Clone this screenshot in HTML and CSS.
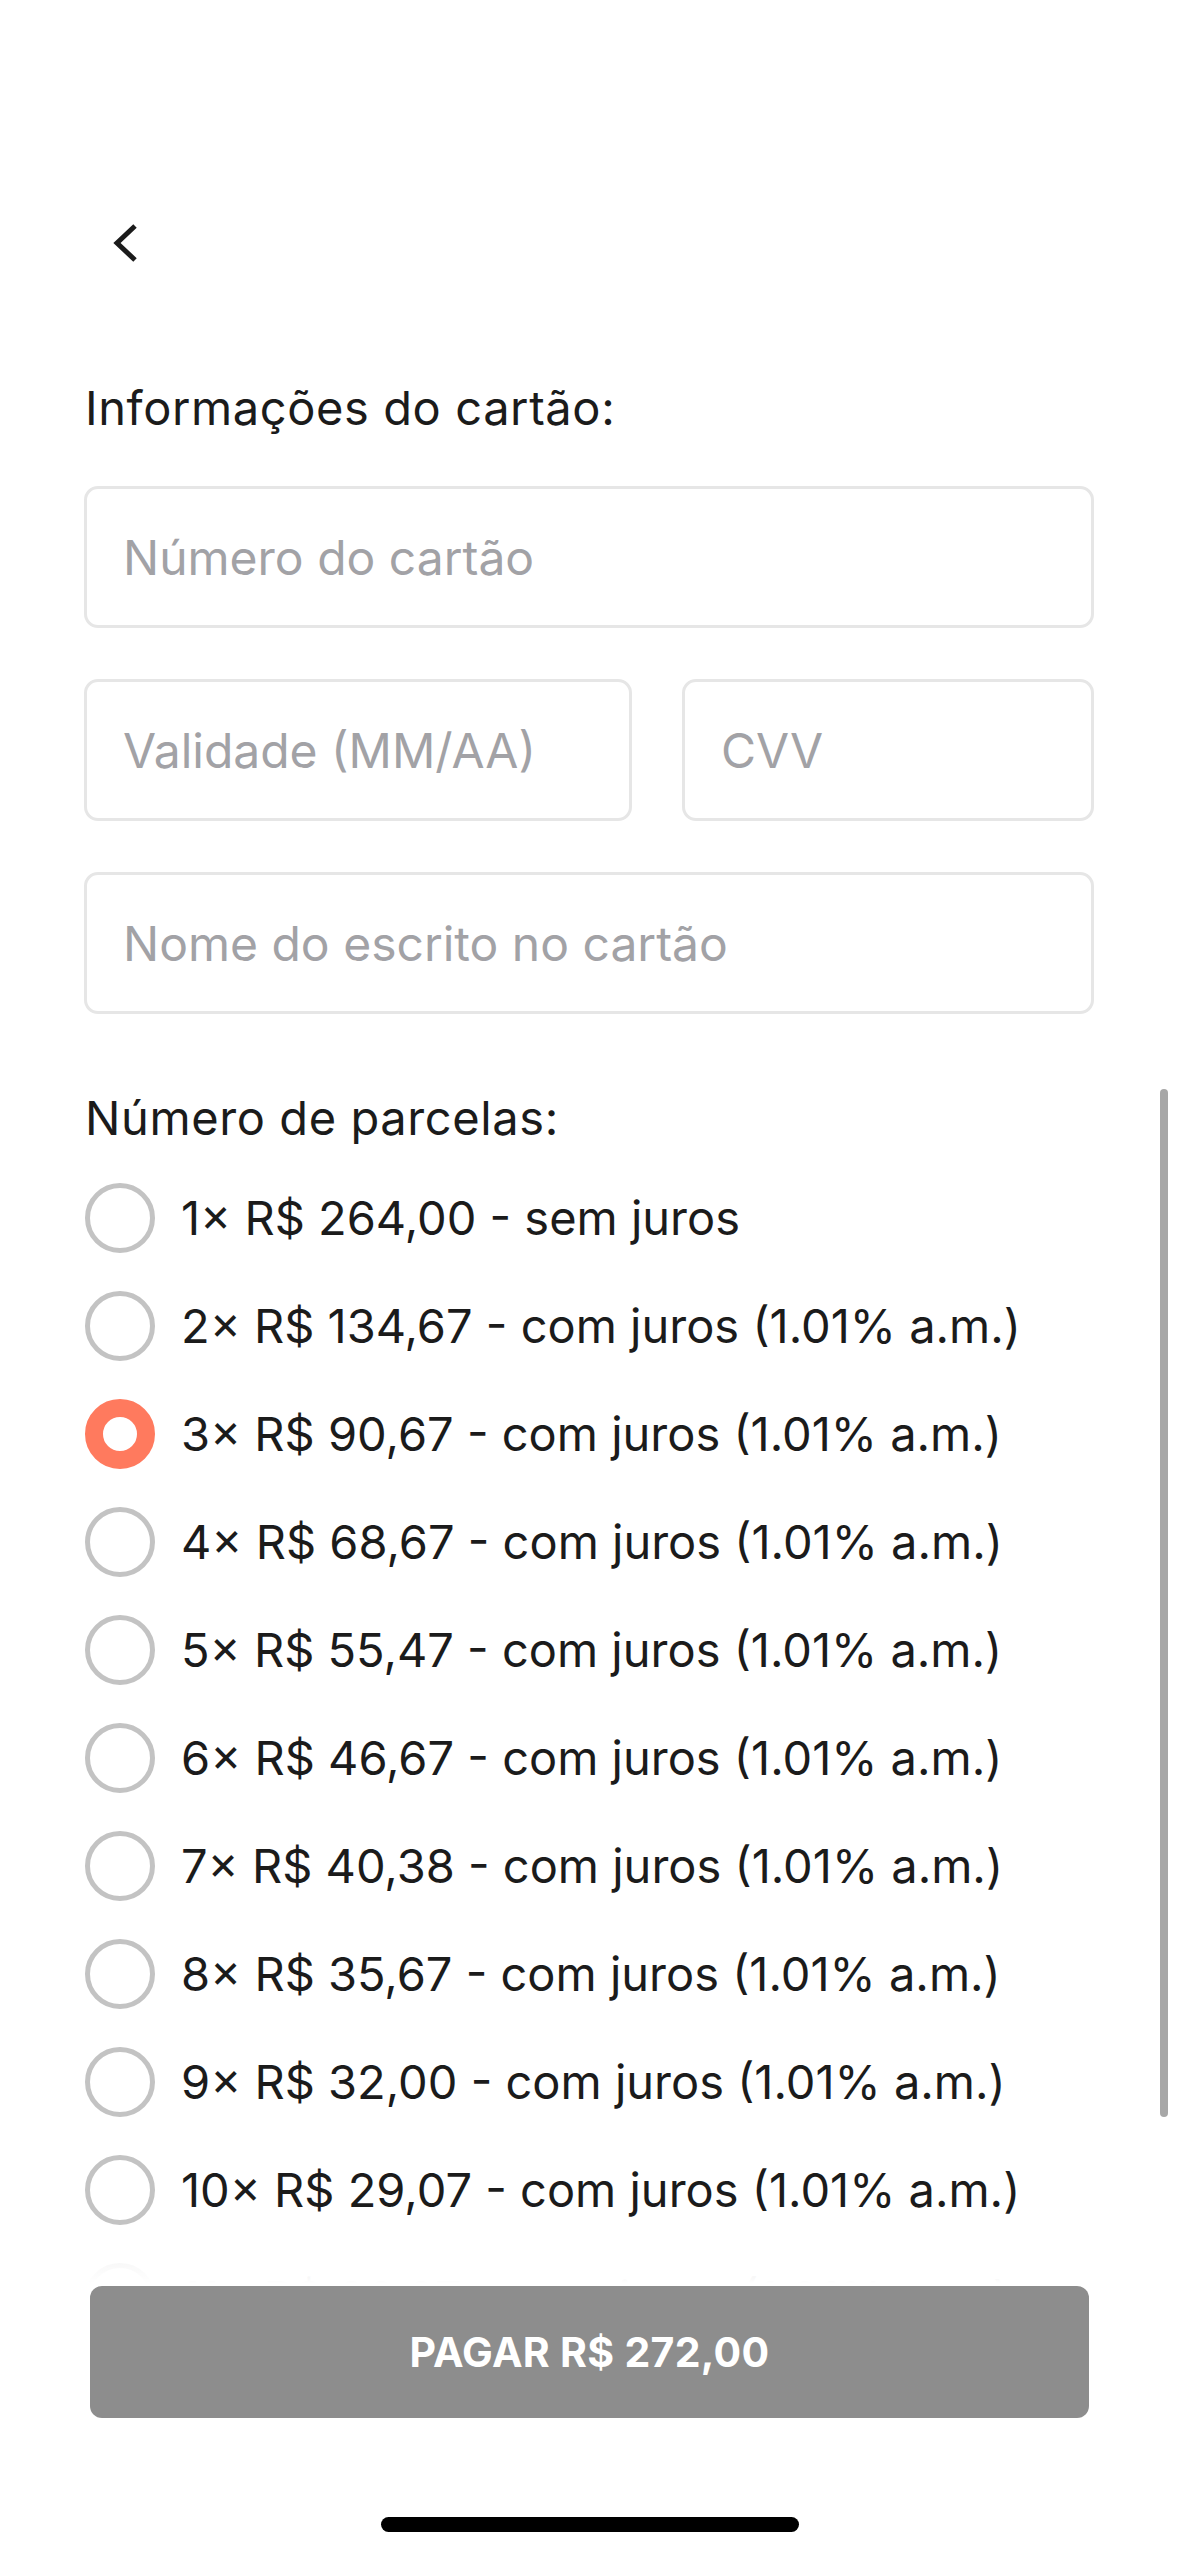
FILE: index.html
```html
<!DOCTYPE html>
<html lang="pt-BR">
<head>
<meta charset="utf-8">
<title>Pagamento com cartão</title>
<link rel="stylesheet" href="styles.css">
</head>
<body>
<div class="page">
  <div class="scroll">
    <div class="content">
      <div class="back">
        <svg width="34" height="48" viewBox="0 0 34 48" aria-hidden="true">
          <path d="M27 7 L9 24 L27 41" fill="none" stroke="#1b1b1b" stroke-width="5"/>
        </svg>
      </div>
      <h2 class="title title-card">Informações do cartão:</h2>
      <div class="fields">
        <input class="field" type="text" placeholder="Número do cartão">
        <div class="field-row">
          <input class="field" type="text" placeholder="Validade (MM/AA)">
          <input class="field" type="text" placeholder="CVV">
        </div>
        <input class="field" type="text" placeholder="Nome do escrito no cartão">
      </div>
      <h2 class="title title-parcelas">Número de parcelas:</h2>
      <ul class="options">
        <li class="option"><span class="radio"></span><span class="label">1× R$ 264,00 - sem juros</span></li>
        <li class="option"><span class="radio"></span><span class="label">2× R$ 134,67 - com juros (1.01% a.m.)</span></li>
        <li class="option"><span class="radio radio-on"></span><span class="label">3× R$ 90,67 - com juros (1.01% a.m.)</span></li>
        <li class="option"><span class="radio"></span><span class="label">4× R$ 68,67 - com juros (1.01% a.m.)</span></li>
        <li class="option"><span class="radio"></span><span class="label">5× R$ 55,47 - com juros (1.01% a.m.)</span></li>
        <li class="option"><span class="radio"></span><span class="label">6× R$ 46,67 - com juros (1.01% a.m.)</span></li>
        <li class="option"><span class="radio"></span><span class="label">7× R$ 40,38 - com juros (1.01% a.m.)</span></li>
        <li class="option"><span class="radio"></span><span class="label">8× R$ 35,67 - com juros (1.01% a.m.)</span></li>
        <li class="option"><span class="radio"></span><span class="label">9× R$ 32,00 - com juros (1.01% a.m.)</span></li>
        <li class="option"><span class="radio"></span><span class="label">10× R$ 29,07 - com juros (1.01% a.m.)</span></li>
        <li class="option"><span class="radio"></span><span class="label">11× R$ 26,67 - com juros (1.01% a.m.)</span></li>
      </ul>
    </div>
    <div class="fade"></div>
    <div class="scrollbar"></div>
  </div>
  <div class="footer">
    <button class="pay" type="button">PAGAR R$ 272,00</button>
    <div class="home-indicator"></div>
  </div>
</div>
</body>
</html>
```

FILE: styles.css
```css
* { box-sizing: border-box; }

html, body {
  margin: 0;
  padding: 0;
  background: #ffffff;
}

body {
  width: 1179px;
  height: 2556px;
  overflow: hidden;
  font-family: Inter, "Noto Sans", sans-serif;
  color: #1b1b1b;
}

.page {
  width: 1179px;
  height: 2556px;
  display: flex;
  flex-direction: column;
}

.scroll {
  position: relative;
  flex: 1;
  overflow: hidden;
}

.content {
  padding: 0 85px 0 84px;
}

.back {
  margin-top: 219px;
  margin-left: 24px;
  height: 48px;
}

.back svg { display: block; }

.title {
  margin: 0;
  font-size: 47px;
  line-height: 52px;
  font-weight: 400;
  letter-spacing: 0.6px;
  padding-left: 1px;
}

.title-card { margin-top: 115px; }
.title-parcelas { margin-top: 78px; }

.fields {
  margin-top: 52px;
  display: flex;
  flex-direction: column;
  gap: 51px;
}

.field-row {
  display: grid;
  grid-template-columns: 548px 1fr;
  gap: 50px;
}

.field {
  display: block;
  width: 100%;
  height: 142px;
  margin: 0;
  border: 3px solid #e6e6e6;
  border-radius: 14px;
  padding: 0 20px 0 36px;
  background: #ffffff;
  font-family: Inter, "Noto Sans", sans-serif;
  font-size: 48px;
  color: #1b1b1b;
  outline: none;
}

.field::placeholder {
  color: #a2a2a6;
  opacity: 1;
}

.options {
  list-style: none;
  margin: 20px 0 0;
  padding: 0;
}

.option {
  display: flex;
  align-items: center;
  height: 108px;
  gap: 26px;
}

.radio {
  flex: none;
  width: 70px;
  height: 70px;
  border-radius: 50%;
  border: 5px solid #c3c3c3;
  background: #ffffff;
  margin-left: 1px;
}

.radio-on {
  border: 18px solid #ff7a5e;
}

.label {
  font-size: 47px;
  line-height: 56px;
  white-space: nowrap;
  color: #1b1b1b;
}

.fade {
  position: absolute;
  left: 0;
  right: 0;
  bottom: 0;
  height: 52px;
  background: linear-gradient(to bottom, rgba(255, 255, 255, 0), rgba(255, 255, 255, 0.85) 50%, #ffffff);
}

.scrollbar {
  position: absolute;
  left: 1160px;
  top: 1089px;
  width: 8px;
  height: 1028px;
  border-radius: 4px;
  background: #a7a7a7;
}

.footer {
  flex: none;
  height: 273px;
  padding: 3px 90px 24px 90px;
  display: flex;
  flex-direction: column;
  align-items: center;
  background: #ffffff;
}

.pay {
  width: 999px;
  height: 132px;
  border: none;
  border-radius: 12px;
  background: #8d8d8d;
  color: #ffffff;
  font-family: Inter, "Noto Sans", sans-serif;
  font-size: 41px;
  font-weight: 700;
  letter-spacing: 0.3px;
  cursor: pointer;
}

.home-indicator {
  margin-top: auto;
  width: 418px;
  height: 15px;
  border-radius: 8px;
  background: #000000;
}
```
